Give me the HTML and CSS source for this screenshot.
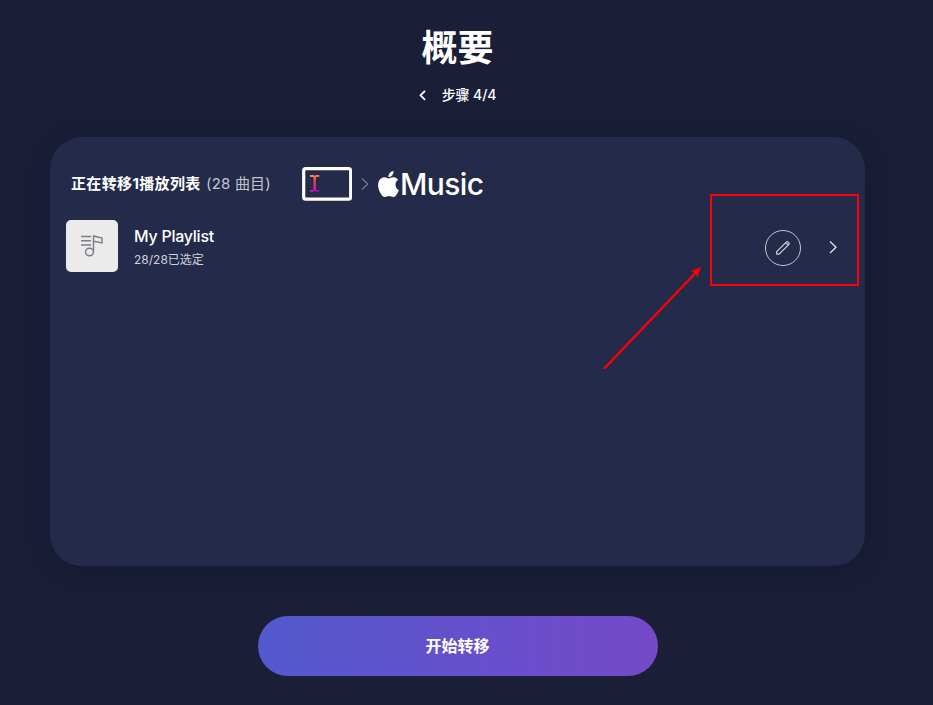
FILE: index.html
```html
<!DOCTYPE html>
<html lang="zh-CN">
<head>
<meta charset="utf-8">
<title>概要</title>
<link rel="stylesheet" href="styles.css">
</head>
<body>
<main class="page">
  <h1 class="title">概要</h1>
  <div class="step">
    <svg class="step-back" width="8" height="12" viewBox="0 0 8 12"><path d="M6 1.800 1.500 6.300 6 10.800"/></svg>
    <span class="step-text">步骤 4/4</span>
  </div>
  <section class="card">
    <header class="card-head">
      <span class="head-title">正在转移1播放列表</span>
      <span class="head-count">(28 曲目)</span>
      <svg class="source" width="51" height="36" viewBox="0 0 51 36">
        <defs><linearGradient id="cursor" gradientUnits="userSpaceOnUse" x1="9" y1="9" x2="15" y2="26"><stop offset="0" stop-color="#f8a03c"/><stop offset=".4" stop-color="#f53a55"/><stop offset=".8" stop-color="#e0208c"/><stop offset="1" stop-color="#9010d0"/></linearGradient></defs>
        <rect x="2.700" y="2.700" width="47" height="30.500" rx="2" fill="none" stroke="#fff" stroke-width="3.200"/>
        <path d="M9 9h3.500l1.200 1 1.200-1h3.500v1.900h-2.900l-.6.600v11.800l.6.700h2.900v1.800h-3.500l-1.200-1-1.200 1H9V24h2.900l.6-.7V11.500l-.6-.6H9z" fill="url(#cursor)"/>
      </svg>
      <svg class="head-arrow" width="8" height="14" viewBox="0 0 8 14"><path d="m1 1.500 5.800 5.500L1 12.500"/></svg>
      <svg class="apple" width="21" height="26" viewBox="2.150 0 19.700 24" preserveAspectRatio="none"><path d="M12.152 6.896c-.948 0-2.415-1.078-3.960-1.040-2.040.027-3.910 1.183-4.961 3.014-2.117 3.675-.546 9.103 1.519 12.090 1.013 1.454 2.208 3.090 3.792 3.039 1.520-.065 2.090-.987 3.935-.987 1.831 0 2.350.987 3.960.948 1.637-.026 2.676-1.480 3.676-2.948 1.156-1.688 1.636-3.325 1.662-3.415-.039-.013-3.182-1.221-3.220-4.857-.026-3.040 2.480-4.494 2.597-4.559-1.429-2.090-3.623-2.324-4.390-2.376-2-.156-3.675 1.090-4.610 1.090zM15.530 3.830c.843-1.012 1.400-2.427 1.245-3.830-1.207.052-2.662.805-3.532 1.818-.780.896-1.454 2.338-1.273 3.714 1.338.104 2.715-.688 3.559-1.701"/></svg>
      <span class="music">Music</span>
    </header>
    <div class="row">
      <div class="cover">
        <svg width="24" height="24" viewBox="0 0 24 24"><path d="M1 2.500h10M1 6.700h10M1 11h10M13.500 18V2l8.500 2v5l-8.500-1.700"/><ellipse cx="9.500" cy="18" rx="4" ry="3.700"/></svg>
      </div>
      <div class="info">
        <div class="name">My Playlist</div>
        <div class="selected">28/28已选定</div>
      </div>
      <div class="actions">
        <button class="edit" aria-label="编辑">
          <svg width="16" height="16" viewBox="0 0 16 16"><path d="M1.700 11.700 11.500 1.900q.7-.7 1.400 0l1 1q.7.700 0 1.400L4.100 14.100H1.700zM10.700 2.700l2.400 2.400"/></svg>
        </button>
        <svg class="next" width="8" height="14" viewBox="0 0 8 14"><path d="m1 .5 6 5.700-6 5.800"/></svg>
      </div>
    </div>
  </section>
  <button class="start">开始转移</button>
</main>
<div class="highlight"></div>
<svg class="pointer" width="102" height="108" viewBox="0 0 102 108"><path d="M1.700 104 92 9.500" fill="none" stroke="#fb0007" stroke-width="2.500" stroke-linecap="round"/><path d="M98 3 94.300 13.500 92.500 9.500 88 7z" fill="#fb0007"/></svg>
</body>
</html>
```
FILE: styles.css
```css
* { box-sizing: border-box; }
body {
  margin: 0;
  width: 933px;
  height: 705px;
  overflow: hidden;
  background: #1a1e37;
  color: #fff;
  font-family: Inter, "Noto Sans CJK SC", sans-serif;
}
svg { display: block; flex: none; }
button { padding: 0; border: 0; color: #fff; font-family: inherit; }
.page {
  width: 915px;
  padding-top: 22px;
  display: flex;
  flex-direction: column;
  align-items: center;
}
.title { margin: 0; height: 52px; line-height: 52px; font-size: 36px; font-weight: 700; }
.step { display: flex; align-items: center; gap: 15px; height: 24px; margin-top: 9px; }
.step-text { font-size: 14px; line-height: 24px; font-weight: 500; letter-spacing: -.1px; }
.step-back path { fill: none; stroke: #fff; stroke-width: 1.8; }
.card {
  width: 815px;
  height: 429px;
  margin-top: 30px;
  padding: 29px 16px 0;
  border-radius: 32px;
  background: #242a49;
  box-shadow: 0 4px 24px rgba(17, 19, 43, .45);
}
.card-head { display: flex; align-items: center; height: 36px; padding-left: 5px; white-space: nowrap; }
.head-title, .head-count { padding-bottom: 3px; font-size: 15px; }
.head-title { font-weight: 700; width: 130px; letter-spacing: .35px; }
.head-count { margin-left: 5px; width: 95px; letter-spacing: .2px; color: #c3c5d0; }
.head-arrow { margin-left: 9px; }
.head-arrow path { fill: none; stroke: #797d92; stroke-width: 1.2; }
.apple { margin-left: 9px; fill: #fff; }
.music { margin-left: 1px; font-size: 30px; font-weight: 500; letter-spacing: -.6px; line-height: 36px; }
.row { display: flex; align-items: center; height: 52px; margin-top: 18px; }
.cover {
  width: 52px;
  height: 52px;
  border-radius: 5px;
  background: #ebebeb;
  display: flex;
  align-items: center;
  justify-content: center;
}
.cover path, .cover ellipse { fill: none; stroke: #7d7d87; stroke-width: 1.4; }
.info { margin-left: 16px; padding-top: 4px; }
.name { font-size: 16px; line-height: 24px; font-weight: 500; letter-spacing: -.25px; }
.selected { font-size: 12px; line-height: 24px; color: #d0d2dc; }
.actions { display: flex; align-items: center; gap: 28px; margin: 3px 12px 0 auto; }
.edit {
  width: 36px;
  height: 36px;
  border: 1px solid #c5c7d0;
  border-radius: 50%;
  background: transparent;
  display: flex;
  align-items: center;
  justify-content: center;
}
.edit path { fill: none; stroke: #d3d5dd; stroke-width: 1.2; stroke-linejoin: round; }
.next path { fill: none; stroke: #e1e2e8; stroke-width: 1.3; }
.start {
  width: 400px;
  height: 60px;
  margin-top: 50px;
  padding-bottom: 2px;
  border-radius: 30px;
  background: linear-gradient(90deg, #5359ce, #7549c9);
  font-size: 16px;
  font-weight: 700;
}
/* Annotation drawn over the card */
.highlight { position: absolute; left: 710px; top: 194px; width: 149px; height: 91.5px; border: 2px solid #fb0007; }
.pointer { position: absolute; left: 603px; top: 264px; }
```
